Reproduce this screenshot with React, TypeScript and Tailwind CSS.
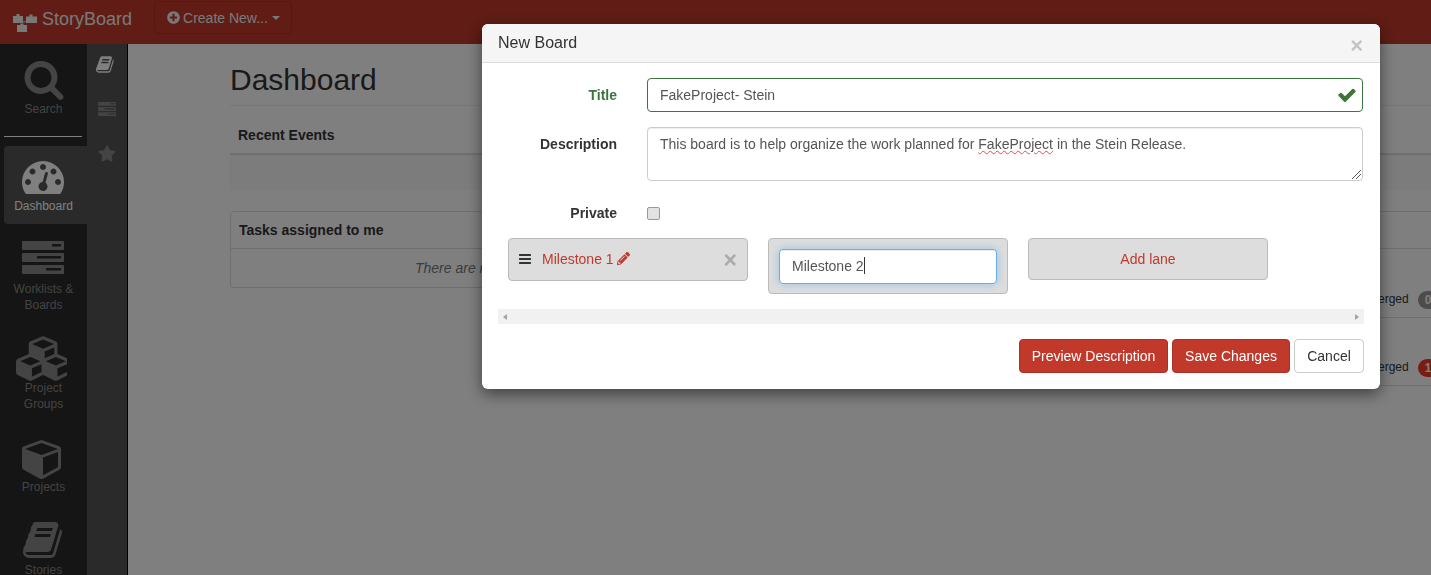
import { ReactNode } from 'react';
import { FaPencilAlt, FaPlusCircle, FaStar } from 'react-icons/fa';

const bookPath =
  'M1639 478q40 57 18 129l-275 906q-19 64-76.5 107.5t-122.5 43.5h-923q-77 0-148.5-53.5t-99.5-131.5q-24-67-2-127 0-4 3-27t4-37q1-8-3-21.5t-3-19.5q2-11 8-21t16.5-23.5 16.5-23.5q23-38 45-91.5t30-91.5q3-10 .5-30t-.5-28q3-11 17-28t17-23q21-36 42-92t25-90q1-9-2.5-32t.5-28q4-13 22-30.5t22-22.5q19-26 42.5-84.5t27.5-96.5q1-8-3-25.5t-2-26.5q2-8 9-18t18-23 17-21q8-12 16.5-30.5t15-35 16-36 19.5-32 26.5-23.5 36-11.5 47.5 5.5l-1 3q38-9 51-9h761q74 0 114 56t18 130l-274 906q-36 119-71.5 153.5t-128.5 34.5h-869q-27 0-38 15-11 16-1 43 24 70 144 70h923q29 0 56-15.5t35-41.5l300-987q7-22 5-57 38 15 59 43zm-1064 2q-4 13 2 22.5t20 9.5h608q13 0 25.5-9.5t16.5-22.5l21-64q4-13-2-22.5t-20-9.5h-608q-13 0-25.5 9.5t-16.5 22.5zm-83 256q-4 13 2 22.5t20 9.5h608q13 0 25.5-9.5t16.5-22.5l21-64q4-13-2-22.5t-20-9.5h-608q-13 0-25.5 9.5t-16.5 22.5z';
const searchPath =
  'M1216 832q0-185-131.5-316.5t-316.5-131.5-316.5 131.5-131.5 316.5 131.5 316.5 316.5 131.5 316.5-131.5 131.5-316.5zm512 832q0 52-38 90t-90 38q-54 0-90-38l-343-342q-179 124-399 124-143 0-273.5-55.5t-225-150-150-225-55.5-273.5 55.5-273.5 150-225 225-150 273.5-55.5 273.5 55.5 225 150 150 225 55.5 273.5q0 220-124 399l343 343q37 37 37 90z';
const gaugePath =
  'M384 1152q0-53-37.5-90.5t-90.5-37.5-90.5 37.5-37.5 90.5 37.5 90.5 90.5 37.5 90.5-37.5 37.5-90.5zm192-448q0-53-37.5-90.5t-90.5-37.5-90.5 37.5-37.5 90.5 37.5 90.5 90.5 37.5 90.5-37.5 37.5-90.5zm428 481l101-382q6-26-7.5-48.5t-38.5-29.5-48 6.5-30 39.5l-101 382q-60 5-107 43.5t-63 98.5q-20 77 20 146t117 89 146-20 89-117q16-60-6-117t-72-91zm660-33q0-53-37.5-90.5t-90.5-37.5-90.5 37.5-37.5 90.5 37.5 90.5 90.5 37.5 90.5-37.5 37.5-90.5zm-640-640q0-53-37.5-90.5t-90.5-37.5-90.5 37.5-37.5 90.5 37.5 90.5 90.5 37.5 90.5-37.5 37.5-90.5zm448 192q0-53-37.5-90.5t-90.5-37.5-90.5 37.5-37.5 90.5 37.5 90.5 90.5 37.5 90.5-37.5 37.5-90.5zm320 448q0 261-141 483-19 29-54 29h-1402q-35 0-54-29-141-221-141-483 0-182 71-348t191-286 286-191 348-71 348 71 286 191 191 286 71 348z';
const cubePath =
  'M896 1629l640-349v-636l-640 233v752zm-64-865l698-254-698-254-698 254zm832-252v768q0 35-18 65t-49 47l-704 384q-28 16-61 16t-61-16l-704-384q-31-17-49-47t-18-65v-768q0-40 23-73t61-47l704-256q22-8 44-8t44 8l704 256q38 14 61 47t23 73z';
const cubesPath =
  'M640 1632l384-192v-314l-384 164v342zm-64-454l404-173-404-173-404 173zm1088 454l384-192v-314l-384 164v342zm-64-454l404-173-404-173-404 173zm-448-293l384-165v-266l-384 164v267zm-64-379l441-189-441-189-441 189zm1088 518v416q0 36-19 67t-52 47l-448 224q-25 14-57 14t-57-14l-448-224q-4-2-7-4-2 2-7 4l-448 224q-25 14-57 14t-57-14l-448-224q-33-16-52-47t-19-67v-416q0-38 21.5-70t56.5-48l434-186v-400q0-38 21.5-70t56.5-48l448-192q23-10 50-10t50 10l448 192q35 16 56.5 48t21.5 70v400l434 186q36 16 57 48t21 70z';
const checkPath =
  'M1671 566q0-40-28-68l-136-136q-28-28-68-28t-68 28l-656 657-294-295q-28-28-68-28t-68 28l-136 136q-28 28-28 68t28 68l362 362 136 136q28 28 68 28t68-28l136-136 724-724q28-28 28-68z';
const barsPath =
  'M1664 1344v128q0 26-19 45t-45 19h-1408q-26 0-45-19t-19-45v-128q0-26 19-45t45-19h1408q26 0 45 19t19 45zm0-512v128q0 26-19 45t-45 19h-1408q-26 0-45-19t-19-45v-128q0-26 19-45t45-19h1408q26 0 45 19t19 45zm0-512v128q0 26-19 45t-45 19h-1408q-26 0-45-19t-19-45v-128q0-26 19-45t45-19h1408q26 0 45 19t19 45z';

const Glyph = ({ d, className, box = '0 0 1792 1792' }: { d: string; className: string; box?: string }) => (
  <svg viewBox={box} className={className} fill="currentColor">
    <path d={d} />
  </svg>
);

const ListIcon = ({ className }: { className: string }) => (
  <svg viewBox="0 0 42 33" className={className} fill="currentColor">
    <path
      fillRule="evenodd"
      d="M1 0h40a1 1 0 0 1 1 1v7a1 1 0 0 1-1 1H1a1 1 0 0 1-1-1V1a1 1 0 0 1 1-1zm29 3v2.5h9V3zM1 12h40a1 1 0 0 1 1 1v7a1 1 0 0 1-1 1H1a1 1 0 0 1-1-1v-7a1 1 0 0 1 1-1zm14 3v2.5h24V15zM1 24h40a1 1 0 0 1 1 1v7a1 1 0 0 1-1 1H1a1 1 0 0 1-1-1v-7a1 1 0 0 1 1-1zm23 3v2.5h15V27z"
    />
  </svg>
);

const Logo = () => (
  <svg viewBox="0 0 26 20" className="w-[26px] h-[20px] text-[#f2f2f2]" fill="currentColor">
    <path d="M0 3h3.500V1h3v2H10v7H0z" />
    <path d="M13 3.500h3.500V1.500h3v2H24v6.500H13z" />
    <path d="M4 12h3.500V10.500h3V12H14v7H4z" />
    <path d="M10 8.500l3 0v.8l-3 0z" />
  </svg>
);

const NavItem = ({ icon, label, className }: { icon: ReactNode; label: ReactNode; className: string }) => (
  <div className={`flex flex-col items-center text-xs leading-4 text-center ${className}`}>
    <div className="h-[40px] flex items-center justify-center">{icon}</div>
    {label}
  </div>
);

const Sidebar = () => (
  <aside className="w-[87px] h-full bg-[#2a2a2a] text-[#888] flex flex-col shrink-0">
    <NavItem
      className="pt-[15px] h-[87px] shrink-0"
      icon={<Glyph d={searchPath} className="w-[42px] h-[42px] shrink-0" />}
      label={<span className="mt-[2px]">Search</span>}
    />
    <div className="mt-[5px] ml-[4px] w-[78px] h-px bg-white shrink-0" />
    <NavItem
      className="mt-[9px] ml-[4px] pr-[4px] h-[78px] pt-[10px] bg-[#555] rounded-l-[4px] text-white shrink-0"
      icon={<Glyph d={gaugePath} className="w-[42px] h-[42px] shrink-0 -ml-[2px]" />}
      label={<span className="mt-[2px]">Dashboard</span>}
    />
    <NavItem
      className="pt-[13px] shrink-0"
      icon={<ListIcon className="w-[42px] h-[33px] -ml-[1px]" />}
      label={
        <span className="mt-[4px]">
          Worklists &amp;
          <br />
          Boards
        </span>
      }
    />
    <NavItem
      className="mt-[25px] shrink-0"
      icon={<Glyph d={cubesPath} box="0 0 2048 1792" className="w-[51px] h-[45px] shrink-0 -ml-[5px]" />}
      label={
        <span className="mt-[2px]">
          Project
          <br />
          Groups
        </span>
      }
    />
    <NavItem
      className="mt-[26px] shrink-0"
      icon={<Glyph d={cubePath} className="w-[42px] h-[42px] shrink-0 -ml-[1px]" />}
      label={<span className="mt-px">Projects</span>}
    />
    <NavItem
      className="mt-[25px] shrink-0"
      icon={<Glyph d={bookPath} className="w-[42px] h-[42px] shrink-0" />}
      label={<span className="mt-[2px]">Stories</span>}
    />
  </aside>
);

const SubNav = () => (
  <div className="w-[41px] h-full bg-[#555] border-r border-black text-[#888] flex flex-col pl-[9px] shrink-0">
    <Glyph d={bookPath} className="mt-[11px] w-[19px] h-[19px] text-white" />
    <ListIcon className="mt-[28px] ml-[2px] w-[18px] h-[14px]" />
    <FaStar className="mt-[29px] ml-[2px] w-[18px] h-[17px]" />
  </div>
);

const Dashboard = () => (
  <main className="flex-1 min-w-0 h-full overflow-hidden bg-white text-[#333]">
    <div className="w-[1300px] ml-[102px]">
      <h1 className="mt-[16px] h-[46px] text-[30px] leading-[40px] border-b border-[#eee]">Dashboard</h1>
      <div className="h-[49px] pl-2 pt-[19px] leading-5 font-bold text-sm border-b-2 border-[#ddd]">Recent Events</div>
      <div className="h-[35px] bg-[#f9f9f9]" />
      <div className="mt-[21px] flex">
        <section className="w-[600px] h-[77px] border border-[#ddd] rounded-[4px] shrink-0">
          <h3 className="h-[37px] pl-2 flex items-center font-bold text-sm border-b border-[#ddd]">
            Tasks assigned to me
          </h3>
          <p className="h-[38px] pl-[184px] flex items-center text-sm italic text-[#777]">
            There are no tasks assigned to you.
          </p>
        </section>
        <section className="flex-1 text-xs">
          <div className="h-[38px] border-y border-[#ddd]" />
          <div className="h-[69px] pl-[538px] pt-[42px] flex gap-[9px] items-start border-b border-[#ddd]">
            <span className="leading-4">Merged</span>
            <span className="px-[7px] h-[18px] leading-[18px] rounded-full bg-[#999] text-white font-bold">0</span>
          </div>
          <div className="h-[68px] pl-[538px] pt-[41px] flex gap-[9px] items-start border-b border-[#ddd]">
            <span className="leading-4">Merged</span>
            <span className="px-[7px] h-[18px] leading-[18px] rounded-full bg-[#f0392b] text-white font-bold">1</span>
          </div>
        </section>
      </div>
    </div>
  </main>
);

const Label = ({ children, className = 'text-[#333]' }: { children: ReactNode; className?: string }) => (
  <label className={`w-[119px] text-right font-bold text-sm shrink-0 ${className}`}>{children}</label>
);

const Modal = () => (
  <div className="fixed left-[482px] top-[24px] w-[898px] h-[365px] bg-white rounded-[6px] shadow-[0_5px_15px_rgba(0,0,0,0.5)] text-sm text-[#333]">
    <div className="h-[39px] pl-[16px] pr-[17px] bg-[#f5f5f5] border-b border-[#ddd] rounded-t-[6px] flex items-center justify-between">
      <h4 className="text-base">New Board</h4>
      <span className="mt-[5px] text-[22px] leading-none font-bold text-black opacity-20">×</span>
    </div>
    <div className="pt-[15px] px-[16px]">
      <div className="flex items-center gap-[30px]">
        <Label className="text-[#3c763d]">Title</Label>
        <div className="relative w-[716px]">
          <input
            readOnly
            value="FakeProject- Stein"
            className="w-full h-[34px] px-3 border border-[#3c763d] rounded-[4px] text-[#555] outline-none"
          />
          <Glyph d={checkPath} className="absolute right-[6px] top-[7px] w-[20px] h-[20px] text-[#3c763d]" />
        </div>
      </div>
      <div className="mt-[15px] flex gap-[30px]">
        <Label>
          <span className="block pt-[7px]">Description</span>
        </Label>
        <div className="relative w-[716px] h-[54px] px-3 py-[6px] border border-[#ccc] rounded-[4px] text-[#555] leading-5 shadow-[inset_0_1px_1px_rgba(0,0,0,0.075)]">
          This board is to help organize the work planned for{' '}
          <span className="underline decoration-wavy decoration-1 decoration-[#e5484d]">FakeProject</span> in the Stein
          Release.
          <svg viewBox="0 0 9 9" className="absolute right-px bottom-px w-[9px] h-[9px] text-[#555]" stroke="currentColor">
            <path d="M0 9 9 0M4 9l5-5" />
          </svg>
        </div>
      </div>
      <div className="mt-[15px] h-[34px] flex items-center gap-[30px]">
        <Label>Private</Label>
        <input
          type="checkbox"
          readOnly
          className="m-0 w-[13px] h-[13px] appearance-none bg-[#e2e2e2] border border-[#999] rounded-[2px]"
        />
      </div>
      <div className="mt-[8px] pl-[10px] flex items-start gap-[20px]">
        <div className="w-[240px] h-[43px] pl-[9px] pr-[10px] pb-[2px] flex items-center bg-[#ddd] border border-[#bbb] rounded-[4px]">
          <Glyph d={barsPath} className="w-[14px] h-[14px] text-[#333]" />
          <span className="ml-[10px] text-[#c0392b]">Milestone 1</span>
          <FaPencilAlt className="ml-[3px] w-[13px] h-[13px] text-[#c0392b]" />
          <span className="ml-auto mt-[3px] text-[23px] leading-none font-bold text-[#aaa]">×</span>
        </div>
        <div className="w-[240px] h-[56px] p-[10px] bg-[#ddd] border border-[#bbb] rounded-[4px]">
          <div className="h-[35px] px-3 pb-[2px] flex items-center bg-white border border-[#66afe9] rounded-[4px] text-[#555] shadow-[inset_0_1px_1px_rgba(0,0,0,0.075),0_0_8px_rgba(102,175,233,0.6)]">
            Milestone 2<span className="w-px h-[17px] bg-[#333]" />
          </div>
        </div>
        <div className="w-[240px] h-[42px] flex items-center justify-center bg-[#ddd] border border-[#bbb] rounded-[4px] text-[#c0392b]">
          Add lane
        </div>
      </div>
      <div className="mt-[15px] h-[15px] px-[5px] bg-[#f1f1f1] flex items-center justify-between">
        <span className="border-y-[3.5px] border-y-transparent border-r-[4px] border-r-[#a3a3a3]" />
        <span className="border-y-[3.5px] border-y-transparent border-l-[4px] border-l-[#a3a3a3]" />
      </div>
      <div className="mt-[15px] flex justify-end gap-[4px]">
        <button className="w-[149px] h-[34px] bg-[#c0392b] border border-[#a93226] rounded-[4px] text-white">Preview Description</button>
        <button className="w-[118px] h-[34px] bg-[#c0392b] border border-[#a93226] rounded-[4px] text-white">Save Changes</button>
        <button className="w-[70px] h-[34px] bg-white border border-[#ccc] rounded-[4px] text-[#333]">Cancel</button>
      </div>
    </div>
  </div>
);

export default function App() {
  return (
    <div className="h-screen overflow-hidden flex flex-col font-['Liberation_Sans',Arial,sans-serif]">
      <header className="h-[44px] shrink-0 bg-[#c0392b] text-[#f2f2f2] flex items-start">
        <div className="ml-[13px] mt-[13px]">
          <Logo />
        </div>
        <span className="ml-[3px] mt-[9px] text-lg leading-5">StoryBoard</span>
        <button className="ml-[22px] mt-px h-[33px] w-[138px] pl-[12px] flex items-center border border-[#a93226] rounded-[4px] text-sm">
          <FaPlusCircle className="w-[13px] h-[13px]" />
          <span className="ml-[3px]">Create New...</span>
          <span className="ml-[4px] border-x-[4px] border-x-transparent border-t-[4px] border-t-current" />
        </button>
      </header>
      <div className="flex-1 min-h-0 flex">
        <Sidebar />
        <SubNav />
        <Dashboard />
      </div>
      <div className="fixed inset-0 bg-black/50" />
      <Modal />
    </div>
  );
}
